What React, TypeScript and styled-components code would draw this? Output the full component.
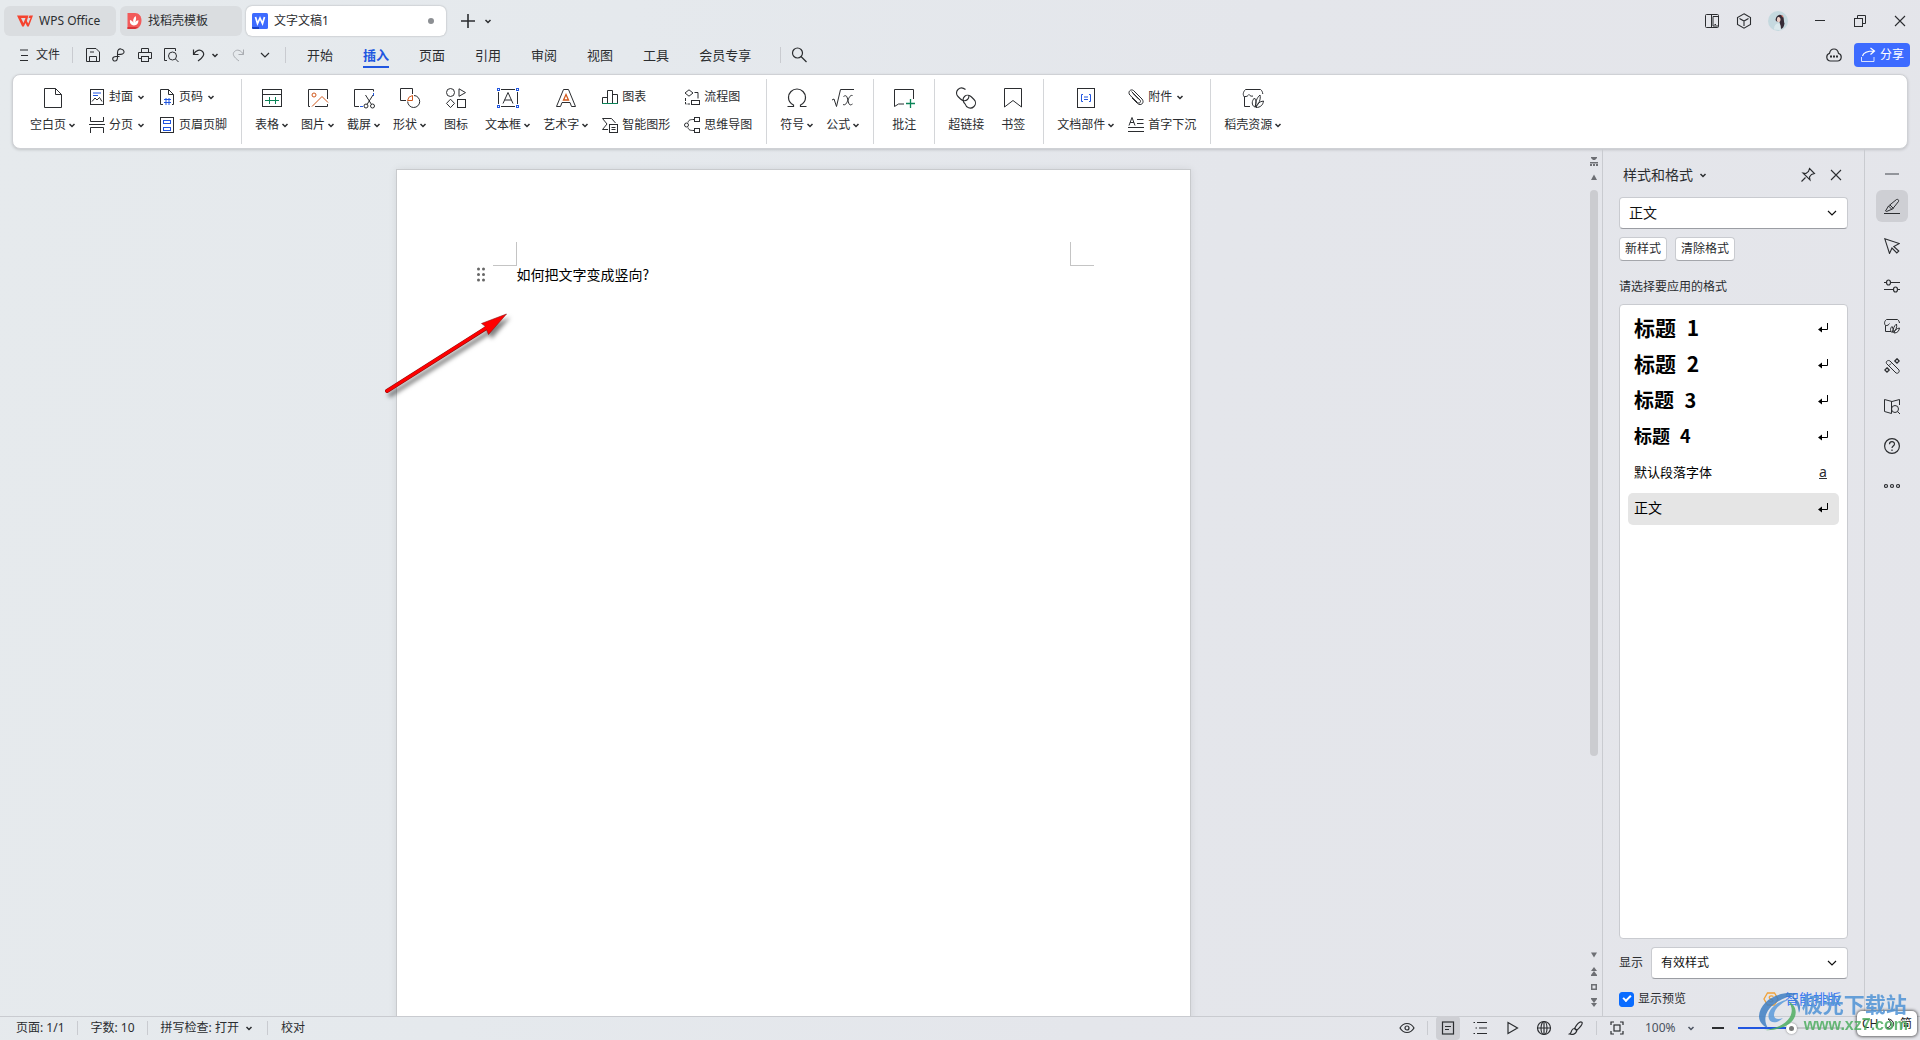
import React, { useState } from "react";
import styled, { createGlobalStyle, css } from "styled-components";

const INK = "#2b2d30";
const BLUE = "#2156e0";
const LINE = "#c9cbd0";
const UI_FONT = `"Noto Sans", "Noto Sans CJK SC", sans-serif`;
const DOC_FONT = `"Noto Sans CJK SC", "Liberation Sans", sans-serif`;

const GlobalStyle = createGlobalStyle`
  *, *::before, *::after { box-sizing: border-box; }
  body {
    margin: 0;
    font-family: ${UI_FONT};
    font-size: 12px;
    line-height: 18px;
    color: #222;
    overflow: hidden;
  }
  button, select, input { font: inherit; color: inherit; }
  button { background: none; border: 0; padding: 0; margin: 0; white-space: nowrap; cursor: default; }
  ul, p, h1, h2 { margin: 0; padding: 0; font-weight: normal; }
  ul { list-style: none; }
`;

/* ---------- icons ---------- */

const Svg = styled.svg`
  display: block;
  flex: none;
  fill: none;
  stroke: currentColor;
  stroke-width: 1;
`;

type IconProps = { size?: number; children: React.ReactNode };
const Icon = ({ size = 16, children }: IconProps) => (
  <Svg width={size} height={size} viewBox={`0 0 ${size} ${size}`} aria-hidden="true">
    {children}
  </Svg>
);

const Chevron = ({ box = 8 }: { box?: number }) => (
  <Svg width={box} height={8} viewBox={`${4 - box / 2} 0 ${box} 8`} aria-hidden="true">
    <path d="M1.5 3l2.5 2.5L6.5 3" strokeWidth="1.5" />
  </Svg>
);

const WideChevron = ({ size = 16 }: { size?: number }) => (
  <Icon size={size}>
    <path d="M4 6l4 4 4-4" strokeWidth="1.200" />
  </Icon>
);

const G = "#0b8457";
const O = "#d0571a";

const big = {
  blank: (
    <>
      <path d="M3.5 2.5h11l6 6v13h-17z" />
      <path d="M14.5 2.5v6h6" />
    </>
  ),
  table: (
    <>
      <rect x="2.5" y="3.5" width="19" height="17" />
      <path d="M2.5 8.5h19" />
      <path d="M5 14.5h14M9.5 11v7M15.5 11v7" stroke={G} />
    </>
  ),
  picture: (
    <>
      <path d="M4 20.5H2.5v-17h19V13M9 20.5h12.5V18" />
      <circle cx="8" cy="9" r="2" stroke={O} />
      <path d="M6 20.5l10-10 6 6" stroke={O} />
    </>
  ),
  screenshot: (
    <>
      <path d="M7 20.5H2.5v-17h19v2" />
      <path d="M8 20.5h3M21.5 7v3" stroke={BLUE} />
      <path d="M13.5 9l6 9.5M21 9l-6 9.5" />
      <circle cx="14" cy="20" r="2" />
      <circle cx="20.5" cy="20" r="2" />
    </>
  ),
  shape: (
    <>
      <path d="M8 14.5H2.5v-12h12V8" />
      <path d="M16 9.500a6 6 0 1 1-6.300 6" />
      <path d="M9.500 14.500a6 6 0 0 1 5-5v5z" stroke={O} />
    </>
  ),
  icons: (
    <>
      <circle cx="6.5" cy="6.500" r="4" />
      <path d="M15 2.800v7.500l6.500-3.700z" />
      <path d="M6.500 13.200l4 4.200-4 4.200-4-4.200z" />
      <rect x="13.500" y="13.500" width="8" height="8" />
    </>
  ),
  textbox: (
    <>
      <path d="M5 3.500h14M5 20.500h14M2.500 6v12M21.500 6v12" />
      <path d="M7 17.500l5-11 5 11M8.500 14h7" />
      <g stroke={BLUE}>
        <rect x="1.500" y="2.500" width="2" height="2" />
        <rect x="20.500" y="2.500" width="2" height="2" />
        <rect x="1.500" y="19.500" width="2" height="2" />
        <rect x="20.500" y="19.500" width="2" height="2" />
      </g>
    </>
  ),
  wordart: (
    <>
      <path d="M9.500 3.500h5l7 17h-4l-1.500-4H8l-1.500 4h-4z" />
      <path d="M12 8.500l2.500 5.500h-5z" stroke={O} strokeWidth="1.300" />
    </>
  ),
  omega: (
    <path d="M2.500 20.500h6v-1.500C5.500 17.500 3.500 15 3.500 11.500a8.500 8.500 0 0 1 17 0c0 3.500-2 6-5 7.500v1.500h6" strokeWidth="1.200" />
  ),
  formula: (
    <>
      <path d="M1 14l2-1 2.500 7.500L9.500 3.500H23" />
      <path d="M12.500 10.500c3-2 3.500 0 4.500 4s1.500 5.500 4.500 3.500M21.500 9.500c-2-.5-3 1-4.500 4.500s-2.500 5.500-5 4.500" />
    </>
  ),
  comment: (
    <>
      <path d="M21.500 13V3.500h-19v17l4-2.500H12" />
      <path d="M18.500 13v9M14 17.500h9" stroke={G} strokeWidth="1.300" />
    </>
  ),
  link: (
    <g strokeWidth="1.100">
      <path d="M11.500 3.500C9 1.500 6 1.500 4 3.500s-2 5 0 7l2.500 2.500c2 2 5 2.500 7 .5 1.200-1.200 1.700-2.500 1.300-4.300" />
      <path d="M12.500 20.500c2.500 2 5.500 2 7.500 0s2-5 0-7L17.500 11c-2-2-5-2.500-7-.5-1.200 1.200-1.700 2.500-1.300 4.300.2 1 1 2.200 1.800 3z" />
    </g>
  ),
  bookmark: <path d="M3.500 2.500h17v18.500L12 14.500l-8.500 6.500z" />,
  docpart: (
    <>
      <rect x="3.500" y="2.500" width="17" height="19" />
      <path d="M9 8.500H7.500v7H9M15 8.500h1.500v7H15M10 11h4M10 13.500h4" stroke={BLUE} />
    </>
  ),
  shell: (
    <>
      <path d="M9 20.500H3.500V10.500M3.500 11C1.500 9 2 6 4.500 3.500h15c1.500 1 2 2.500 2.300 4.500M3.500 10.500C6 11 7 9.500 8 8.500c1 1.500 2.500 2 4 1.500" />
      <path d="M13.500 21c-3-2-3-6 0-9 2 3 2 6 0 9zM14.500 21c0-5 1-9 4.500-12 1 4-1 9-4.500 12zM15 21.500c1-4 3.500-6 7.500-6.500-.5 4-3 6.500-7.500 6.500z" />
    </>
  ),
};

const small = {
  cover: (
    <>
      <rect x="1.500" y="0.500" width="13" height="15" />
      <path d="M4 4h8M4 6.500h5" stroke={BLUE} />
      <path d="M3 12.500l3-3.500 2 2 2.500-2.500L13 12.500" />
    </>
  ),
  pageBreak: <path d="M1.500 0v4.500h13V0M0 7.500h16M1.500 16v-5.500h13V16" />,
  pageNumber: (
    <>
      <path d="M4 15.500H1.500V.5h8l5 5v10H13" />
      <path d="M9.500.5v5h5" />
      <path d="M5 10.500h7M5 13.500h7M7 9v7M10 9v7" stroke={BLUE} />
    </>
  ),
  headerFooter: (
    <>
      <rect x="1.500" y="0.500" width="13" height="15" />
      <g stroke={BLUE}>
        <rect x="4.500" y="3.500" width="7" height="3" />
        <rect x="4.500" y="10.500" width="7" height="3" />
      </g>
    </>
  ),
  chart: (
    <>
      <path d="M.5 14V8.500h5V14M5.500 14V1.500h5V14M10.500 5.500h5V14" />
      <path d="M0 14.500h16" stroke={G} />
    </>
  ),
  smart: (
    <>
      <path d="M6 12.500H.5l4.500-5.500L.5 1.500h9l4 4.500" />
      <rect x="7.500" y="7.500" width="8" height="8" />
      <path d="M9.500 10.500h4M9.500 12.500h4" />
    </>
  ),
  flow: (
    <>
      <path d="M5 .8l4 3.200-4 3.200L1 4zM10.500 3.500h3.500v6" />
      <path d="M1.500 9v6H6" strokeDasharray="3 1" />
      <rect x="7.500" y="11.500" width="8" height="4" />
    </>
  ),
  mind: (
    <>
      <circle cx="2.500" cy="8" r="2" />
      <path d="M4 5.500C4.500 3 6 2.500 10 2.500M4 10.500C4.500 13 6 13.500 10 13.500" />
      <rect x="10.500" y="0.500" width="5" height="4" />
      <rect x="10.500" y="11.500" width="5" height="4" />
    </>
  ),
  clip: (
    <path d="M3.500 2.500l8.500 8.500c1.500 2-.5 4-2.500 2.500L1.800 6C-.5 3 2.500-.5 5.500 1.500l8.500 8.500c3 3.500-1 7.500-4.500 4.500L4 9M5 4.500l6 6" />
  ),
  dropCap: (
    <>
      <path d="M1 8.500l3-8 3 8M2 5.500h4M9 2.500h6.500M9 6.500h6.500M0 10.500h16M0 14.500h16" />
    </>
  ),
  menu: <path d="M4 3h8M5 8.500h7M4 13.500h8" />,
  save: (
    <>
      <path d="M1.500 1.500h9.500l3.500 3.500v9.500h-13z" />
      <path d="M4.500 14.500v-5h7v5M5 5h4" />
    </>
  ),
  chain: <path d="M8.500 9.500H5c-4.500 0-4 4.500-1 4.500 2 0 2.500-1.500 2.500-4v-4C6.500 3 8 1.500 10 2c3.500.5 4 4 1.500 5-1 .5-2 .5-5 .5" strokeWidth="1.100" />,
  print: (
    <>
      <path d="M4.500 5.500v-4h7v4M4 11.500H1.500v-6h13v6H12" />
      <rect x="4.500" y="9.500" width="7" height="5" />
    </>
  ),
  preview: (
    <>
      <path d="M4 13.500H1.500v-12h11V4" />
      <circle cx="9.500" cy="9" r="4" />
      <path d="M12.500 12l3 3" />
    </>
  ),
  undo: <path d="M4.500 2.500v5h5M4.500 7.500C7 3 11 2 13.500 4.500s1 5.500-4.500 9.500" strokeWidth="1.200" />,
  redo: <path d="M12.500 2.500v5h-5M12.500 7.500C10 3 6 2 3.500 4.500s-1 5.500 4.500 9.500" stroke="#a9acb1" />,
  search: (
    <g strokeWidth="1.200">
      <circle cx="6.500" cy="6" r="5" />
      <path d="M10 9.500l5.500 5.500" />
    </g>
  ),
  cloud: (
    <>
      <path d="M4.500 14a3.900 3.900 0 0 1-1-7.600C4 3.500 6 2 8 2s4 1.500 4.500 4.400a3.900 3.900 0 0 1-1 7.600z" strokeWidth="1.200" />
      <path d="M4 9.500h2M7 9.500h2M10 9.500h2" strokeWidth="2" />
    </>
  ),
  share: (
    <>
      <path d="M2.500 9C3.500 5.500 7 4 14 4M10.500 1l4 3-4 3.500" strokeWidth="1.200" />
      <path d="M1.500 10v4.500h12.500V10" opacity="0.800" />
    </>
  ),
  split: (
    <>
      <rect x="1.500" y="1.500" width="13" height="13" rx="1" />
      <path d="M7.500 1.500v13M14.500 3.500h-5.500v9.500h5.500M10.500 11.500h1.500" />
    </>
  ),
  cube: <path d="M8 .8l6.500 3.700v7L8 15.200l-6.500-3.700v-7zM3.500 5.500L8 8l4.500-2.500M8 8v5" strokeWidth="1.100" />,
  minimize: <path d="M3 7.500h10" />,
  restore: (
    <>
      <rect x="2.500" y="5.500" width="8" height="8" />
      <path d="M5.500 5.500v-3h8v8h-3" />
    </>
  ),
  close: <path d="M3 3l10 10M13 3L3 13" strokeWidth="1.100" />,
  plus: <path d="M8 1v14M1 8h14" strokeWidth="1.600" />,
  pin: <path d="M1.500 14.500l4-4M9.500 1.500l5 5-3 1-2 2.500.500 3-7-7 3 .500L8.500 4.500z" strokeWidth="1.100" />,
  pen: <path d="M0 15.500h16M1.500 13l3-5 8-6.500c1.500-.5 2.500.5 2 2L8.500 11l-6 2.500zM4.500 8l3.500 3.500M6 7l3.500 3.500" />,
  cursor: <path d="M.8.8l14.500 4.700-5.500 3 5 4.500-2 2-4.800-5-2.500 5.500z" strokeWidth="1.100" />,
  sliders: (
    <g strokeWidth="1.200">
      <path d="M0 4.500h2.500M6.500 4.500H16M0 11.500h9.500M13.500 11.500H16" />
      <ellipse cx="4.500" cy="4.500" rx="2" ry="2.500" />
      <ellipse cx="11.500" cy="11.500" rx="2" ry="2.500" />
    </g>
  ),
  shell: (
    <>
      <path d="M7 13.500H1.500V7.500C-.2 5.500.5 3 2.500 1.500h11c1.300.8 1.700 2 2 3.500M1.500 7.500C3.500 8 5 6.500 5.500 5.500" />
      <path d="M8 14.500c-2-2-2-4 0-6 1.500 2 1.500 4 0 6zM9 14.500c0-4 1-6.500 3.500-8.500.8 3-.5 6.500-3.500 8.500zM10 15c.500-3 2.500-4.500 5.500-5-.5 3-2 5-5.500 5z" />
    </>
  ),
  tools: (
    <>
      <path d="M2.500 5.500c-1-2 1.500-4 3.500-2.500l9 9c.8 2-1 4-3 3z" />
      <path d="M7 5.500L5 7.500" />
      <path d="M13 .8l2.200 2.200L13 5.200 10.800 3zM3 9.800L5.200 12 3 14.200.8 12z" strokeWidth="1.300" />
    </>
  ),
  book: (
    <>
      <path d="M15.500 7V1.500L8 3.500.5 1.500v12l7 2V3.500" />
      <circle cx="11" cy="11" r="3.500" />
      <path d="M13.500 13.500l2.500 2.500" />
    </>
  ),
  help: (
    <g strokeWidth="1.200">
      <circle cx="8" cy="8" r="7.400" />
      <path d="M5.500 6.300c0-3.500 5-3.500 5-.3C10.500 8 8 8 8 10" />
      <path d="M8 11.500v1.500" />
    </g>
  ),
  dots: (
    <g strokeWidth="1.200">
      <circle cx="2" cy="8" r="1.500" />
      <circle cx="8" cy="8" r="1.500" />
      <circle cx="14" cy="8" r="1.500" />
    </g>
  ),
  dash: <path d="M1 8h14" strokeWidth="1.500" stroke="#777a80" />,
  eye: (
    <g strokeWidth="1.200">
      <path d="M1 8c3.500-6 10.500-6 14 0-3.500 6-10.500 6-14 0z" />
      <circle cx="8" cy="8" r="2" />
    </g>
  ),
  page: (
    <g strokeWidth="1.200">
      <rect x="2.500" y="2" width="11" height="12" />
      <path d="M5 6.500h6M5 9.500h4" />
    </g>
  ),
  outline: <path d="M5 2.500h10M7 8h8M5 13.500h10M1.500 2.500H3M3.500 8H5M1.500 13.500H3" strokeWidth="1.200" />,
  play: <path d="M4 2.500v11L13.500 8z" strokeWidth="1.200" />,
  globe: (
    <g strokeWidth="1.200">
      <circle cx="8" cy="8" r="6.500" />
      <ellipse cx="8" cy="8" rx="3" ry="6.500" />
      <path d="M1.500 8h13M8 1.500v13" />
    </g>
  ),
  brush: (
    <g strokeWidth="1.200">
      <path d="M6.500 8.500C8.500 5 11.500 1 13.800 2.200c1.500 1.300-1.500 5-5.300 8.300z" />
      <path d="M6.500 8.500c1.500.2 2.500 1.500 2 3-.8 2.500-4 3.500-7 2.500 2-1 1.500-2.500 2.500-4 .6-1 1.500-1.500 2.500-1.500z" />
    </g>
  ),
  fit: (
    <g strokeWidth="1.200">
      <rect x="5" y="5" width="6" height="6" />
      <path d="M2 5V2h3M11 2h3v3M14 11v3h-3M5 14H2v-3" />
    </g>
  ),
  minus: <path d="M2 8h12" strokeWidth="2" />,
  enter: (
    <>
      <path d="M12.500 3v6.500H6" />
      <path d="M7 6.500v6L3 9.500z" fill="currentColor" stroke="none" />
    </>
  ),
};

/* ---------- frame ---------- */

const Frame = styled.div`
  position: relative;
  display: flex;
  flex-direction: column;
  height: 100vh;
  color: ${INK};
  background: linear-gradient(100deg, #e6eaed 0%, #e5e9ed 30%, #e4e6eb 60%, #e4e5ea 100%);
`;

const TitleBar = styled.header`
  display: flex;
  align-items: center;
  gap: 4px;
  height: 42px;
  flex: none;
  padding: 0 12px 0 4px;
`;

const FileTab = styled.button<{ $width: number; $active?: boolean; $inset?: number }>`
  display: flex;
  align-items: center;
  gap: 6px;
  width: ${(p) => p.$width}px;
  height: 30px;
  padding: 0 12px 0 ${(p) => p.$inset ?? 6}px;
  border-radius: 6px;
  background: ${(p) => (p.$active ? "#fff" : "#dadde0")};
  box-shadow: ${(p) => (p.$active ? "0 0 2px rgba(0,0,0,.3)" : "none")};
`;

const UnsavedDot = styled.span`
  width: 6px;
  height: 6px;
  margin-left: auto;
  border-radius: 50%;
  background: #8c8f93;
`;

const IconButton = styled.button<{ $size?: number; $active?: boolean }>`
  display: grid;
  place-items: center;
  flex: none;
  width: ${(p) => p.$size ?? 16}px;
  height: ${(p) => p.$size ?? 16}px;
  border-radius: ${(p) => ((p.$size ?? 16) > 24 ? 6 : 4)}px;
  background: ${(p) => (p.$active ? "#cecfd4" : "transparent")};
`;

const NewTab = styled.div`
  display: flex;
  align-items: center;
  gap: 4px;
  padding-left: 10px;
`;

const WindowTools = styled.div`
  display: flex;
  align-items: center;
  gap: 16px;
  margin-left: auto;
`;

const WindowButtons = styled.div`
  display: flex;
  gap: 24px;
  padding-left: 8px;
`;

const MenuBar = styled.nav`
  display: flex;
  align-items: center;
  height: 26px;
  flex: none;
  padding: 0 10px 0 16px;
`;

const Divider = styled.span<{ $gap: number }>`
  width: 1px;
  height: 16px;
  flex: none;
  margin: 0 ${(p) => p.$gap}px;
  background: ${LINE};
`;

const TextButton = styled.button<{ $gap?: number }>`
  display: flex;
  align-items: center;
  gap: ${(p) => p.$gap ?? 4}px;
`;

const QuickTools = styled.div`
  display: flex;
  align-items: center;
  gap: 10px;
`;

const MenuTabs = styled.div`
  display: flex;
  gap: 30px;
  padding: 0 19px 0 9px;
`;

const MenuTab = styled.button<{ $active?: boolean }>`
  height: 26px;
  font-size: 13px;
  ${(p) =>
    p.$active &&
    css`
      color: ${BLUE};
      font-weight: bold;
      background: linear-gradient(${BLUE}, ${BLUE}) bottom / 100% 2px no-repeat;
    `}
`;

const ShareArea = styled.div`
  display: flex;
  align-items: center;
  gap: 12px;
  margin-left: auto;
`;

const ShareButton = styled(TextButton)`
  height: 24px;
  padding: 0 6px;
  border-radius: 4px;
  color: #fff;
  background: #3d6bff;
`;

/* ---------- ribbon ---------- */

const RibbonCard = styled.section`
  display: flex;
  flex: none;
  height: 75px;
  margin: 6px 12px 0;
  padding: 4px;
  border: 1px solid #cfd1d5;
  border-radius: 8px;
  background: #fff;
  box-shadow: 0 1px 3px rgba(0, 0, 0, 0.16);
`;

const RibbonGroup = styled.div`
  display: flex;
  gap: 12px;
  height: 65px;
  padding: 7px 13px 0;
  & + & {
    border-left: 1px solid #d4d6d9;
  }
`;

const BigButton = styled.button`
  display: flex;
  flex-direction: column;
  align-items: center;
  gap: 6px;
  min-width: 34px;
`;

const BigLabel = styled.span`
  display: flex;
  align-items: center;
  gap: 2px;
`;

const SmallColumn = styled.div`
  display: flex;
  flex-direction: column;
  align-items: flex-start;
  gap: 8px;
  padding: 1px 1px 0;
`;

const SmallButton = styled(TextButton)`
  height: 20px;
`;

type BigItem = { icon: keyof typeof big; label: string; menu?: boolean };
type SmallItem = { icon: keyof typeof small; label: string; menu?: boolean };
type RibbonPart = BigItem | SmallItem[];

const ribbon: RibbonPart[][] = [
  [
    { icon: "blank", label: "空白页", menu: true },
    [
      { icon: "cover", label: "封面", menu: true },
      { icon: "pageBreak", label: "分页", menu: true },
    ],
    [
      { icon: "pageNumber", label: "页码", menu: true },
      { icon: "headerFooter", label: "页眉页脚" },
    ],
  ],
  [
    { icon: "table", label: "表格", menu: true },
    { icon: "picture", label: "图片", menu: true },
    { icon: "screenshot", label: "截屏", menu: true },
    { icon: "shape", label: "形状", menu: true },
    { icon: "icons", label: "图标" },
    { icon: "textbox", label: "文本框", menu: true },
    { icon: "wordart", label: "艺术字", menu: true },
    [
      { icon: "chart", label: "图表" },
      { icon: "smart", label: "智能图形" },
    ],
    [
      { icon: "flow", label: "流程图" },
      { icon: "mind", label: "思维导图" },
    ],
  ],
  [
    { icon: "omega", label: "符号", menu: true },
    { icon: "formula", label: "公式", menu: true },
  ],
  [{ icon: "comment", label: "批注" }],
  [
    { icon: "link", label: "超链接" },
    { icon: "bookmark", label: "书签" },
  ],
  [
    { icon: "docpart", label: "文档部件", menu: true },
    [
      { icon: "clip", label: "附件", menu: true },
      { icon: "dropCap", label: "首字下沉" },
    ],
  ],
  [{ icon: "shell", label: "稻壳资源", menu: true }],
];

const Ribbon = () => (
  <RibbonCard>
    {ribbon.map((group, i) => (
      <RibbonGroup key={i}>
        {group.map((part, j) =>
          Array.isArray(part) ? (
            <SmallColumn key={j}>
              {part.map((item) => (
                <SmallButton key={item.label}>
                  <Icon>{small[item.icon]}</Icon>
                  {item.label}
                  {item.menu && <Chevron />}
                </SmallButton>
              ))}
            </SmallColumn>
          ) : (
            <BigButton key={j}>
              <Icon size={24}>{big[part.icon]}</Icon>
              <BigLabel>
                {part.label}
                {part.menu && <Chevron />}
              </BigLabel>
            </BigButton>
          )
        )}
      </RibbonGroup>
    ))}
  </RibbonCard>
);

/* ---------- document ---------- */

const Body = styled.div`
  display: flex;
  flex: 1;
  min-height: 0;
`;

const Canvas = styled.main`
  display: flex;
  justify-content: center;
  flex: 1;
  min-width: 0;
  padding-top: 20px;
  overflow: hidden;
`;

const Paper = styled.article`
  display: grid;
  grid-template-columns: 120px 1fr 120px;
  grid-template-rows: 96px 1fr;
  flex: none;
  width: 795px;
  height: 1123px;
  border: 1px solid #c8cacd;
  background: #fff;
  box-shadow: 0 0 8px rgba(0, 0, 0, 0.08);
`;

const MarginCorner = styled.span<{ $side: "left" | "right" }>`
  align-self: end;
  justify-self: ${(p) => (p.$side === "left" ? "end" : "start")};
  width: 24px;
  height: 24px;
  border-bottom: 1px solid #c4c4c4;
  ${(p) => (p.$side === "left" ? "border-right" : "border-left")}: 1px solid #c4c4c4;
`;

const Gutter = styled.div`
  display: flex;
  justify-content: flex-end;
  padding-right: 28px;
`;

const Paragraph = styled.p`
  font-family: ${DOC_FONT};
  font-size: 14px;
  line-height: 16px;
  color: #000;
`;

const ArrowMark = styled.svg`
  position: absolute;
  left: 380px;
  top: 306px;
  overflow: visible;
  filter: drop-shadow(3px 4px 2px rgba(0, 0, 0, 0.5));
`;

const ScrollBar = styled.div`
  display: flex;
  flex-direction: column;
  align-items: center;
  gap: 4px;
  flex: none;
  width: 16px;
  padding: 6px 0 7px;
  color: #6d6f74;
`;

const Track = styled.div`
  flex: 1;
  width: 8px;
  padding-top: 3px;
`;

const Thumb = styled.div`
  height: 75%;
  border-radius: 4px;
  background: #cbccd0;
`;

const StepIcon = ({ d }: { d: string }) => (
  <IconButton $size={12}>
    <Svg width="12" height="12" viewBox="0 0 12 12" aria-hidden="true">
      <path d={d} fill="currentColor" stroke="none" fillRule="evenodd" />
    </Svg>
  </IconButton>
);

/* ---------- styles panel ---------- */

const Panel = styled.aside`
  display: flex;
  flex-direction: column;
  gap: 8px;
  flex: none;
  width: 262px;
  padding: 12px 16px 5px;
  border-left: 1px solid ${LINE};
`;

const PanelHeader = styled.div`
  display: flex;
  align-items: center;
  gap: 12px;
  height: 28px;
  padding: 0 4px;
`;

const PanelTitle = styled(TextButton)`
  margin-right: auto;
  font-size: 14px;
`;

const SelectBox = styled.div<{ $size: number }>`
  display: grid;
  flex: 1 0 auto;
  align-items: center;
  height: 32px;
  border: 1px solid ${LINE};
  border-bottom-color: #9b9da3;
  border-radius: 4px;
  background: #fff;
  font-size: ${(p) => p.$size}px;
  color: #111;
  > * {
    grid-area: 1 / 1;
  }
  > svg {
    justify-self: end;
    margin-right: 7px;
    pointer-events: none;
  }
`;

const Select = styled.select`
  width: 100%;
  height: 30px;
  padding: 0 9px;
  border: 0;
  outline: 0;
  appearance: none;
  background: transparent;
`;

const Row = styled.div<{ $height?: number }>`
  display: flex;
  align-items: center;
  gap: 8px;
  flex: none;
  height: ${(p) => p.$height ?? 32}px;
`;

const SmallAction = styled.button`
  height: 24px;
  padding: 0 5px;
  border: 1px solid ${LINE};
  border-bottom-color: #a4a6ab;
  border-radius: 4px;
  background: #fff;
`;

const Hint = styled.p`
  padding: 9px 0 0;
`;

const StyleList = styled.ul`
  display: flex;
  flex-direction: column;
  gap: 4px;
  flex: 1;
  min-height: 0;
  padding: 8px;
  border: 1px solid ${LINE};
  border-radius: 4px;
  background: #fff;
`;

const StyleItem = styled.button<{ $size: number; $bold?: boolean; $selected?: boolean }>`
  display: flex;
  align-items: center;
  justify-content: space-between;
  width: 100%;
  height: 32px;
  padding: 0 8px 3px 6px;
  border-radius: 5px;
  background: ${(p) => (p.$selected ? "#e5e5e5" : "transparent")};
  font-family: ${DOC_FONT};
  font-size: ${(p) => p.$size}px;
  font-weight: ${(p) => (p.$bold ? "bold" : "normal")};
  line-height: 29px;
  color: #000;
`;

const Level = styled.span`
  margin-left: 6px;
`;

const CharMark = styled.span`
  width: 16px;
  font-family: ${UI_FONT};
  font-size: 14px;
  line-height: 16px;
  text-align: center;
  text-decoration: underline;
  color: ${INK};
`;

const CheckLabel = styled.label`
  display: flex;
  align-items: center;
  gap: 4px;
  margin-right: auto;
`;

const CheckBox = styled.input`
  display: grid;
  place-items: center;
  width: 15px;
  height: 15px;
  margin: 0;
  border: 1px solid #8b8d92;
  border-radius: 3px;
  appearance: none;
  background: #fff;
  &:checked {
    border-color: #0a6cff;
    background: #0a6cff;
  }
  &:checked::after {
    content: "";
    width: 8px;
    height: 5px;
    margin-bottom: 3px;
    border: solid #fff;
    border-width: 0 0 2px 2px;
    transform: rotate(-45deg);
  }
`;

const SmartLayout = styled(TextButton)`
  padding-right: 7px;
  font-size: 14px;
  color: #3a78f2;
`;

const styleItems = [
  { name: "标题", level: "1", size: 21, bold: true },
  { name: "标题", level: "2", size: 21, bold: true },
  { name: "标题", level: "3", size: 20, bold: true },
  { name: "标题", level: "4", size: 18, bold: true },
  { name: "默认段落字体", size: 13, character: true },
  { name: "正文", size: 14 },
];

const StylesPanel = () => {
  const [selected, setSelected] = useState(5);
  return (
    <Panel>
      <PanelHeader>
        <PanelTitle $gap={6}>
          样式和格式
          <Chevron />
        </PanelTitle>
        <IconButton aria-label="固定">
          <Icon>{small.pin}</Icon>
        </IconButton>
        <IconButton aria-label="关闭">
          <Icon>{small.close}</Icon>
        </IconButton>
      </PanelHeader>
      <Row>
        <SelectBox $size={14}>
          <Select aria-label="当前样式">
            <option>正文</option>
          </Select>
          <WideChevron />
        </SelectBox>
      </Row>
      <Row $height={24}>
        <SmallAction>新样式</SmallAction>
        <SmallAction>清除格式</SmallAction>
      </Row>
      <Hint>请选择要应用的格式</Hint>
      <StyleList>
        {styleItems.map((item, i) => (
          <li key={i}>
            <StyleItem $size={item.size} $bold={item.bold} $selected={i === selected} onClick={() => setSelected(i)}>
              <span>
                {item.name}
                {item.level && <> <Level>{item.level}</Level></>}
              </span>
              {item.character ? <CharMark>a</CharMark> : <Icon>{small.enter}</Icon>}
            </StyleItem>
          </li>
        ))}
      </StyleList>
      <Row>
        <label htmlFor="style-filter">显示</label>
        <SelectBox $size={12}>
          <Select id="style-filter">
            <option>有效样式</option>
          </Select>
          <WideChevron />
        </SelectBox>
      </Row>
      <Row $height={24}>
        <CheckLabel>
          <CheckBox type="checkbox" defaultChecked />
          显示预览
        </CheckLabel>
        <SmartLayout $gap={6}>
          <Icon>
            <g stroke="#f0a33a" strokeWidth="1.300">
              <path d="M4.500 2h7L15 8l-3.500 6h-7L1 8z" />
              <path d="M10.500 5.500C8 4 5.500 5.500 6.500 7.200S10.500 8.500 9.800 10 7 11 5.500 10" />
            </g>
          </Icon>
          智能排版
        </SmartLayout>
      </Row>
    </Panel>
  );
};

const Rail = styled.aside`
  display: flex;
  flex-direction: column;
  align-items: center;
  gap: 8px;
  flex: none;
  width: 56px;
  padding: 17px 1px 0 0;
  border-left: 1px solid ${LINE};
`;

const railTools: [keyof typeof small, string][] = [
  ["pen", "样式"],
  ["cursor", "选择"],
  ["sliders", "属性"],
  ["shell", "稻壳"],
  ["tools", "工具"],
  ["book", "查阅"],
  ["help", "帮助"],
  ["dots", "更多"],
];

/* ---------- status bar ---------- */

const StatusBar = styled.footer`
  display: flex;
  align-items: center;
  flex: none;
  height: 24px;
  padding: 0 12px 1px 16px;
  border-top: 1px solid ${LINE};
`;

const StatusDivider = styled.span`
  width: 1px;
  height: 14px;
  margin: 0 13px 0 12px;
  background: ${LINE};
`;

const ViewTools = styled.div`
  display: flex;
  align-items: center;
  gap: 8px;
  margin-left: auto;
`;

const ViewDivider = styled.span`
  width: 1px;
  height: 14px;
  background: ${LINE};
`;

const ZoomLevel = styled.button`
  display: flex;
  align-items: center;
  justify-content: space-between;
  width: 61px;
  padding: 0 3px 0 8px;
  color: #4b5260;
`;

const ZoomSlider = styled.input`
  width: 106px;
  height: 12px;
  margin: 0;
  appearance: none;
  background: linear-gradient(90deg, #2156e0 50%, #c3c5ca 50%) center / 100% 2px no-repeat;
  &::-webkit-slider-thumb {
    appearance: none;
    width: 11px;
    height: 11px;
    border: 3px solid #fff;
    border-radius: 50%;
    background: #777;
    box-shadow: 0 0 2px rgba(0, 0, 0, 0.5);
  }
`;

const views: [keyof typeof small, string][] = [
  ["page", "页面视图"],
  ["outline", "大纲"],
  ["play", "播放"],
  ["globe", "Web 版式"],
  ["brush", "写作模式"],
];

/* ---------- overlays ---------- */

const ImeBar = styled.div`
  position: absolute;
  right: 3px;
  bottom: 4px;
  display: flex;
  align-items: center;
  justify-content: space-between;
  width: 60px;
  height: 25px;
  padding: 0 5px;
  border-radius: 5px;
  background: #fff;
  color: #222;
  box-shadow: 0 0 3px 1px rgba(0, 0, 0, 0.55);
`;

const Watermark = styled.div`
  position: absolute;
  right: 12px;
  bottom: 5px;
  display: flex;
  align-items: center;
  opacity: 0.85;
  pointer-events: none;
`;

const WatermarkText = styled.div`
  font: bold 21px/24px ${DOC_FONT};
  color: #4f93d6;
`;

const WatermarkSite = styled.div`
  padding-left: 2px;
  font: bold 16px/20px "Liberation Sans", sans-serif;
  color: #4fae62;
`;

export default function App() {
  return (
    <Frame>
      <GlobalStyle />
      <TitleBar>
        <FileTab $width={112} $inset={13}>
          <Icon>
            <path d="M0 2.500h9.500L8.500 5H4l2.500 5L9.500 2.500h2L9.800 8l1.500 2.500L13.500 5h-2l1-2.500H16l-4.200 11h-1.600L8.500 10l-1.700 3.500H5.200z" fill="#f5432f" stroke="none" />
          </Icon>
          WPS Office
        </FileTab>
        <FileTab $width={122}>
          <Icon>
            <path d="M1.500 0H9c4 0 6.500 3.500 6.500 7.500S13 16 9 16H1.500z" fill="#f25a5a" stroke="none" />
            <path d="M1.500 14h11L9 16H1.500z" fill="#d93238" stroke="none" />
            <path d="M8 12.500C4.500 12 3.500 9.500 4 7c2 .5 3 1.500 3.500 3C6.500 7 7.500 5 9.500 3c1 2 .8 4-.5 6.500 1-1.500 2-2 3.500-2.200 0 3-1.500 5-4.500 5.200z" fill="#fff" stroke="none" />
          </Icon>
          找稻壳模板
        </FileTab>
        <FileTab $width={200} $active>
          <Icon>
            <rect width="16" height="16" rx="1.500" fill="#3d6bff" stroke="none" />
            <path d="M0 14h7v2H1.500A1.500 1.500 0 0 1 0 14.500z" fill="#1640c4" stroke="none" />
            <path d="M3.500 4l2 6.500L8 5l2.500 5.500 2-6.500" stroke="#fff" strokeWidth="1.700" />
          </Icon>
          文字文稿1
          <UnsavedDot />
        </FileTab>
        <NewTab>
          <IconButton aria-label="新建">
            <Icon>{small.plus}</Icon>
          </IconButton>
          <IconButton aria-label="标签列表">
            <Chevron box={12} />
          </IconButton>
        </NewTab>
        <WindowTools>
          <IconButton aria-label="分屏">
            <Icon>{small.split}</Icon>
          </IconButton>
          <IconButton aria-label="应用">
            <Icon>{small.cube}</Icon>
          </IconButton>
          <IconButton $size={20} aria-label="账户">
            <Svg width="20" height="20" viewBox="0 0 20 20" aria-hidden="true">
              <g stroke="none">
                <circle cx="10" cy="10" r="10" fill="#c5d9df" />
                <path d="M7.500 9C8 5 11 2.500 14 4.500c2.500 2 1.500 5 2.500 8-.5 3-1.500 5-3.500 5.500-1-2-.5-5-1.500-7-1 0-3 0-4-2z" fill="#352b36" />
                <path d="M9.500 6.500c1.500-1 3 0 3 2s-1 3-2.500 2.500-1.300-3.500-.5-4.500z" fill="#eccfc6" />
                <path d="M6 18.500c0-3.500 1.500-6 4.500-6 2 0 2.500 3 2 6.500z" fill="#dbe9ec" />
                <path d="M13 4l2.500 1-1 1.500z" fill="#d86b5f" />
              </g>
            </Svg>
          </IconButton>
          <WindowButtons>
            <IconButton aria-label="最小化">
              <Icon>{small.minimize}</Icon>
            </IconButton>
            <IconButton aria-label="还原">
              <Icon>{small.restore}</Icon>
            </IconButton>
            <IconButton aria-label="关闭">
              <Icon>{small.close}</Icon>
            </IconButton>
          </WindowButtons>
        </WindowTools>
      </TitleBar>

      <MenuBar>
        <TextButton>
          <Icon>{small.menu}</Icon>
          文件
        </TextButton>
        <Divider $gap={12} />
        <QuickTools>
          <IconButton aria-label="保存">
            <Icon>{small.save}</Icon>
          </IconButton>
          <IconButton aria-label="输出">
            <Icon>{small.chain}</Icon>
          </IconButton>
          <IconButton aria-label="打印">
            <Icon>{small.print}</Icon>
          </IconButton>
          <IconButton aria-label="打印预览">
            <Icon>{small.preview}</Icon>
          </IconButton>
          <TextButton aria-label="撤销">
            <Icon>{small.undo}</Icon>
            <Chevron box={12} />
          </TextButton>
          <IconButton aria-label="恢复">
            <Icon>{small.redo}</Icon>
          </IconButton>
          <IconButton aria-label="自定义">
            <WideChevron />
          </IconButton>
        </QuickTools>
        <Divider $gap={12} />
        <MenuTabs>
          {["开始", "插入", "页面", "引用", "审阅", "视图", "工具", "会员专享"].map((tab) => (
            <MenuTab key={tab} $active={tab === "插入"}>
              {tab}
            </MenuTab>
          ))}
        </MenuTabs>
        <Divider $gap={10} />
        <IconButton aria-label="搜索">
          <Icon>{small.search}</Icon>
        </IconButton>
        <ShareArea>
          <IconButton aria-label="云同步">
            <Icon>{small.cloud}</Icon>
          </IconButton>
          <ShareButton>
            <Icon>{small.share}</Icon>
            分享
          </ShareButton>
        </ShareArea>
      </MenuBar>

      <Ribbon />

      <Body>
        <Canvas>
          <Paper>
            <MarginCorner $side="left" />
            <span />
            <MarginCorner $side="right" />
            <Gutter>
              <Svg width="16" height="18" viewBox="0 0 16 18" aria-hidden="true">
                <g fill="#666" stroke="none">
                  {[3, 8.500, 14].map((y) => (
                    <g key={y}>
                      <circle cx="5.500" cy={y} r="1.500" />
                      <circle cx="10.500" cy={y} r="1.500" />
                    </g>
                  ))}
                </g>
              </Svg>
            </Gutter>
            <Paragraph>如何把文字变成竖向?</Paragraph>
          </Paper>
        </Canvas>
        <ScrollBar>
          <StepIcon d="M3 2h6v1L7 5H5L3 3zM2 7h8v1.500H2zM2 9h2v2H2zM5 9h2v2H5zM8 9h2v2H8z" />
          <StepIcon d="M6 3.500L9 9H3z" />
          <Track>
            <Thumb />
          </Track>
          <StepIcon d="M3 3.500h6L6 8.500z" />
          <StepIcon d="M6 2l3 4H3zM6 6l3 4H3zM3 10h6v1H3z" />
          <StepIcon d="M3 3h6v6H3zM4.500 4.500v3h3v-3z" />
          <StepIcon d="M3 1h6v1H3zM3 2h6L6 6zM3 6h6l-3 4z" />
        </ScrollBar>
        <StylesPanel />
        <Rail>
          <IconButton aria-label="收起">
            <Icon>{small.dash}</Icon>
          </IconButton>
          {railTools.map(([icon, label], i) => (
            <IconButton key={icon} $size={32} $active={i === 0} aria-label={label}>
              <Icon>{small[icon]}</Icon>
            </IconButton>
          ))}
        </Rail>
      </Body>

      <StatusBar>
        <span>页面: 1/1</span>
        <StatusDivider />
        <span>字数: 10</span>
        <StatusDivider />
        <TextButton>
          拼写检查: 打开
          <Chevron box={12} />
        </TextButton>
        <StatusDivider />
        <span>校对</span>
        <ViewTools>
          <IconButton $size={24} aria-label="护眼模式">
            <Icon>{small.eye}</Icon>
          </IconButton>
          <ViewDivider />
          {views.map(([icon, label], i) => (
            <IconButton key={icon} $size={24} $active={i === 0} aria-label={label}>
              <Icon>{small[icon]}</Icon>
            </IconButton>
          ))}
          <ViewDivider />
          <IconButton $size={24} aria-label="适合页面">
            <Icon>{small.fit}</Icon>
          </IconButton>
          <ZoomLevel>
            100%
            <Chevron />
          </ZoomLevel>
          <IconButton $size={24} aria-label="缩小">
            <Icon>{small.minus}</Icon>
          </IconButton>
          <ZoomSlider type="range" min={0} max={200} defaultValue={100} aria-label="缩放" />
          <IconButton $size={24} aria-label="放大">
            <Icon>{small.plus}</Icon>
          </IconButton>
          <IconButton $size={24} aria-label="全屏">
            <Icon>{small.fit}</Icon>
          </IconButton>
        </ViewTools>
      </StatusBar>

      <ArrowMark width="130" height="90" viewBox="0 0 130 90" aria-hidden="true">
        <path d="M7 85L108 21" stroke="#8d1010" strokeWidth="4" strokeLinecap="round" />
        <path d="M126.500 8L101.500 17.500l3.500 2.500 3.500 8.500z" fill="#f00" stroke="#8d1010" strokeWidth="0.600" />
        <path d="M7 85L110 19.500" stroke="#f00" strokeWidth="3" strokeLinecap="round" />
      </ArrowMark>

      <ImeBar>
        <span>CH</span>
        <Icon size={12}>
          <path d="M5 1c4 2 4 8-1.500 9C9 12 12 7 10 4 9 2 7 1 5 1z" />
        </Icon>
        <span>简</span>
      </ImeBar>
      <Watermark>
        <Svg width="44" height="42" viewBox="0 0 44 42" aria-hidden="true">
          <g stroke="none">
            <path d="M40 2C22-2 2 8 1 24c0 6 4 10 9 12C2 24 12 8 40 2z" fill="#3f7fc4" />
            <path d="M32 7C18 9 8 19 11 27c2 5 9 4 14-1-5 2-9 1-9-3C16 17 23 11 32 7z" fill="#5b9bdb" />
            <path d="M30 9c8 4 10 12 5 19S17 39 6 38c12-1 22-6 26-13 3-6 2-11-2-16z" fill="#4fae62" />
            <path d="M33 4c8 3 11 10 8 17-1-7-3-12-8-17z" fill="#3f7fc4" />
          </g>
        </Svg>
        <div>
          <WatermarkText>极光下载站</WatermarkText>
          <WatermarkSite>www.xz7.com</WatermarkSite>
        </div>
      </Watermark>
    </Frame>
  );
}
